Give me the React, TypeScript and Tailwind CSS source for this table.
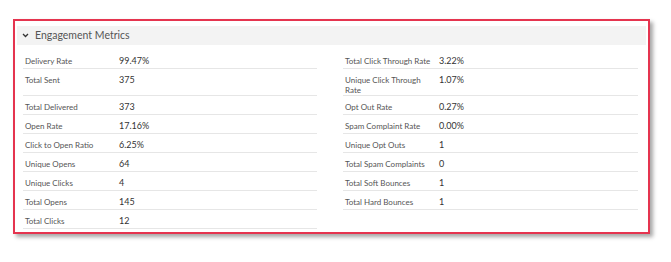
import React from "react";

const left: [string, string][] = [
  ["Delivery Rate", "99.47%"],
  ["Total Sent", "375"],
  ["Total Delivered", "373"],
  ["Open Rate", "17.16%"],
  ["Click to Open Ratio", "6.25%"],
  ["Unique Opens", "64"],
  ["Unique Clicks", "4"],
  ["Total Opens", "145"],
  ["Total Clicks", "12"],
];

const right: ([string, string] | null)[] = [
  ["Total Click Through Rate", "3.22%"],
  ["Unique Click Through Rate", "1.07%"],
  ["Opt Out Rate", "0.27%"],
  ["Spam Complaint Rate", "0.00%"],
  ["Unique Opt Outs", "1"],
  ["Total Spam Complaints", "0"],
  ["Total Soft Bounces", "1"],
  ["Total Hard Bounces", "1"],
  null,
];

function Row({ item }: { item: [string, string] | null }) {
  if (!item) return <div />;
  return (
    <div className="flex min-h-[19px] border-b border-[#e6e6e6] pt-[6px]">
      <div className="w-[96px] shrink-0 pl-[2px] pr-[6px] text-[8px] leading-[10px] text-[#555]">
        {item[0]}
      </div>
      <div className="text-[9px] leading-[10px] text-[#333]">{item[1]}</div>
    </div>
  );
}

export default function App() {
  const cells: React.ReactNode[] = [];
  for (let i = 0; i < left.length; i++) {
    cells.push(<Row key={"l" + i} item={left[i]} />);
    cells.push(<Row key={"r" + i} item={right[i]} />);
  }
  return (
    <div
      className="w-[671px] h-[262px] bg-white pt-[19px] pl-[13px]"
      style={{ fontFamily: 'Lato, "Noto Sans", sans-serif' }}
    >
      <div className="w-[637px] h-[215px] border-2 border-[#e5344f] bg-white shadow-[3px_3px_4px_rgba(0,0,0,0.35)]">
        <div className="mx-[2px] mt-[5px] flex h-[19px] items-center bg-[#f3f3f3] pl-[5px]">
          <svg width="7" height="7" viewBox="0 0 7 7" className="mr-[6px]">
            <path d="M1 2 L3.5 4.5 L6 2" fill="none" stroke="#333" strokeWidth="1.3" />
          </svg>
          <span className="text-[10.5px] text-[#555]">Engagement Metrics</span>
        </div>
        <div className="mt-[5px] ml-[8px] grid grid-cols-[294px_295px] gap-x-[26px]">
          {cells}
        </div>
      </div>
    </div>
  );
}
